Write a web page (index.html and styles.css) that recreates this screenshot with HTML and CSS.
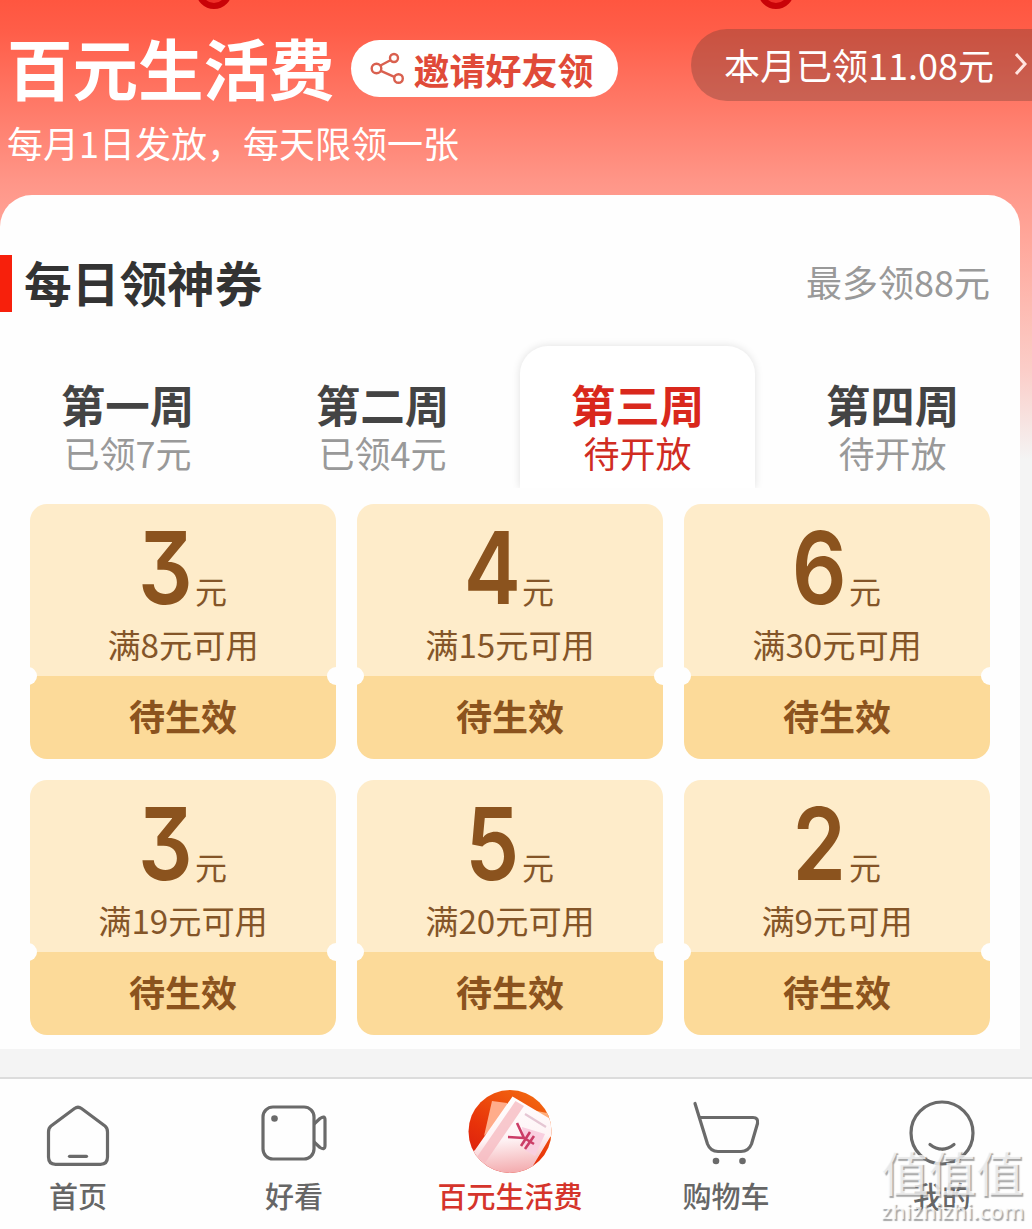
FILE: index.html
```html
<!DOCTYPE html>
<html lang="zh-CN">
<head>
    <meta charset="UTF-8">
    <meta name="viewport" content="width=device-width, initial-scale=1.0">
    <title>百元生活费</title>
    <link rel="stylesheet" href="styles.css">
</head>
<body>
    <div class="page">
        <span class="knot knot-left"></span>
        <span class="knot knot-right"></span>

        <header class="header">
            <div class="header-left">
                <div class="title-row">
                    <h1>百元生活费</h1>
                    <button class="invite">
                        <svg width="36" height="34" viewBox="0 0 36 34" fill="none" stroke="#d9604f" stroke-width="2.4">
                            <circle cx="6.5" cy="16.5" r="4.8"/>
                            <circle cx="24" cy="6" r="4"/>
                            <circle cx="28.5" cy="26.5" r="4.3"/>
                            <path d="M10.5 13.5 20.8 8M10.8 18.800 24.300 24.800"/>
                        </svg>
                        <span>邀请好友领</span>
                    </button>
                </div>
                <p class="subtitle">每月1日发放，每天限领一张</p>
            </div>
            <div class="received">
                <span>本月已领11.08元</span>
                <svg width="12" height="22" viewBox="0 0 12 22" fill="none" stroke="#ffe3df" stroke-width="3">
                    <path d="M1 1 10 11 1 21"/>
                </svg>
            </div>
        </header>

        <main class="card">
            <div class="section-head">
                <h2>每日领神券</h2>
                <span class="limit">最多领88元</span>
            </div>

            <div class="tabs">
                <div class="tab"><b>第一周</b><span>已领7元</span></div>
                <div class="tab"><b>第二周</b><span>已领4元</span></div>
                <div class="tab active"><b>第三周</b><span>待开放</span></div>
                <div class="tab"><b>第四周</b><span>待开放</span></div>
            </div>

            <div class="coupons">
                <div class="coupon">
                    <div class="coupon-top">
                        <div class="amount"><span class="num">3</span><span class="unit">元</span></div>
                        <div class="rule">满8元可用</div>
                    </div>
                    <div class="status">待生效</div>
                </div>
                <div class="coupon">
                    <div class="coupon-top">
                        <div class="amount"><span class="num">4</span><span class="unit">元</span></div>
                        <div class="rule">满15元可用</div>
                    </div>
                    <div class="status">待生效</div>
                </div>
                <div class="coupon">
                    <div class="coupon-top">
                        <div class="amount"><span class="num">6</span><span class="unit">元</span></div>
                        <div class="rule">满30元可用</div>
                    </div>
                    <div class="status">待生效</div>
                </div>
                <div class="coupon">
                    <div class="coupon-top">
                        <div class="amount"><span class="num">3</span><span class="unit">元</span></div>
                        <div class="rule">满19元可用</div>
                    </div>
                    <div class="status">待生效</div>
                </div>
                <div class="coupon">
                    <div class="coupon-top">
                        <div class="amount"><span class="num">5</span><span class="unit">元</span></div>
                        <div class="rule">满20元可用</div>
                    </div>
                    <div class="status">待生效</div>
                </div>
                <div class="coupon">
                    <div class="coupon-top">
                        <div class="amount"><span class="num">2</span><span class="unit">元</span></div>
                        <div class="rule">满9元可用</div>
                    </div>
                    <div class="status">待生效</div>
                </div>
            </div>
        </main>

        <nav class="tabbar">
            <a class="item">
                <svg width="84" height="84" viewBox="0 0 84 84" fill="none" stroke="#6a6a6a" stroke-width="3.2" stroke-linecap="round" stroke-linejoin="round">
                    <path d="M38.5 18.5Q42 16 45.5 18.5L69 36Q71.500 38 71.500 42V67Q71.500 74.300 64.500 74.300H19.500Q12.500 74.300 12.500 67V42Q12.500 38 15 36Z"/>
                    <path d="M33.500 66.300H50.500"/>
                </svg>
                <span>首页</span>
            </a>
            <a class="item">
                <svg width="84" height="84" viewBox="0 0 84 84" fill="none" stroke="#6a6a6a" stroke-width="3.2" stroke-linejoin="round">
                    <rect x="11" y="17" width="51" height="52" rx="10"/>
                    <path d="M62 34 68 28.500Q73 25 73 30V55.500Q73 60.500 68 57.500L62 52"/>
                    <circle cx="22.500" cy="28.500" r="3.300" fill="#6a6a6a" stroke="none"/>
                </svg>
                <span>好看</span>
            </a>
            <a class="item current">
                <svg width="84" height="84" viewBox="0 0 84 84">
                    <defs>
                        <linearGradient id="disc" x1="0.8" y1="0" x2="0.2" y2="1">
                            <stop offset="0" stop-color="#f36a10"/>
                            <stop offset="0.6" stop-color="#e8330a"/>
                            <stop offset="1" stop-color="#d81a10"/>
                        </linearGradient>
                        <linearGradient id="note" x1="0.4" y1="0" x2="0.5" y2="1">
                            <stop offset="0" stop-color="#ffffff"/>
                            <stop offset="0.55" stop-color="#fef3f5"/>
                            <stop offset="1" stop-color="#f3a9ac"/>
                        </linearGradient>
                        <clipPath id="round"><circle cx="42" cy="41.5" r="41.5"/></clipPath>
                    </defs>
                    <g clip-path="url(#round)">
                        <rect width="84" height="84" fill="url(#disc)"/>
                        <path d="M24 11 39 13 40 24 16 46Z" fill="#ffac8a"/>
                        <path d="M64 20 84 24V48L64 36Z" fill="#ffae7c"/>
                        <path d="M44.500 6.500 84 30V44L60 84H0V66L7 60Z" fill="url(#note)"/>
                        <path d="M47.500 11 56 16 17 73 9 67Z" fill="#f6bcc2" opacity="0.800"/>
                        <path d="M54 37 77 44 67 66 57 60Z" fill="#f9cfe0"/>
                        <path d="M57 24 78 37" stroke="#e5c6d3" stroke-width="2.200"/>
                        <path d="M49 33 56 48M40 47 56 48 66 54M62 42 53 56M66 46 57 59" fill="none" stroke="#cb3d67" stroke-width="2.600"/>
                    </g>
                </svg>
                <span>百元生活费</span>
            </a>
            <a class="item">
                <svg width="84" height="84" viewBox="0 0 84 84" fill="none" stroke="#6a6a6a" stroke-width="3.2" stroke-linecap="round" stroke-linejoin="round">
                    <path d="M11 13.500 23.500 54Q26.500 61.500 34 61.500H57Q64.500 61.500 67.500 54L73.500 33.500Q74.500 27.500 69 27.500H16"/>
                    <circle cx="32" cy="71" r="3.300" fill="#6a6a6a" stroke="none"/>
                    <circle cx="58.500" cy="71" r="3.300" fill="#6a6a6a" stroke="none"/>
                </svg>
                <span>购物车</span>
            </a>
            <a class="item">
                <svg width="84" height="84" viewBox="0 0 84 84" fill="none" stroke="#6a6a6a" stroke-width="3.2" stroke-linecap="round">
                    <circle cx="42" cy="43" r="31"/>
                    <path d="M30 54.500Q42 64 54 54.500"/>
                </svg>
                <span>我的</span>
            </a>
        </nav>

        <div class="watermark">
            <div class="mark-name">值值值</div>
            <div class="mark-url">zhizhizhi.com</div>
        </div>
    </div>
</body>
</html>
```

FILE: styles.css
```css
* {
    box-sizing: border-box;
    margin: 0;
    padding: 0;
}

body {
    font-family: "Noto Sans CJK SC", sans-serif;
    background: #f4f4f4;
}

.page {
    position: relative;
    width: 1032px;
    height: 1229px;
    overflow: hidden;
    display: flex;
    flex-direction: column;
    background: linear-gradient(#ff5640 0, #ff5d48 30px, #ff9587 180px, #ffa79b 240px, #fbcdc8 370px, #f4f4f4 460px);
}

/* bottom of the two red knots hanging from the banner */
.knot {
    position: absolute;
    top: -27px;
    width: 36px;
    height: 36px;
    border: 6px solid #c90308;
    border-radius: 50%;
    background: #ef2f28;
}

.knot-left {
    left: 196px;
}

.knot-right {
    left: 758px;
}

.header {
    display: flex;
    justify-content: space-between;
    align-items: flex-start;
    height: 195px;
    padding-top: 29px;
}

.header-left {
    padding-left: 7px;
}

.title-row {
    display: flex;
    align-items: center;
    gap: 16px;
    height: 79px;
}

h1 {
    color: #fff;
    font-size: 65.5px;
    font-weight: 700;
    line-height: 76px;
    padding-bottom: 3px;
}

.invite {
    display: flex;
    align-items: center;
    gap: 8px;
    width: 267px;
    height: 57px;
    padding-left: 19px;
    border: none;
    border-radius: 29px;
    background: #fff;
    color: #e04a38;
    font-family: inherit;
    font-size: 36px;
    font-weight: 700;
    line-height: 56px;
    white-space: nowrap;
}

.subtitle {
    color: #fff;
    font-size: 36px;
    line-height: 68px;
}

.received {
    display: flex;
    align-items: center;
    gap: 21px;
    width: 341px;
    height: 72px;
    padding: 0 0 2px 33px;
    border-radius: 36px 0 0 36px;
    background: rgba(100, 60, 50, 0.34);
    color: #fff;
    font-size: 36px;
    line-height: 68px;
    white-space: nowrap;
}

.card {
    width: 1020px;
    height: 854px;
    border-radius: 32px 32px 0 0;
    background: #fefefe;
}

.section-head {
    display: flex;
    align-items: center;
    justify-content: space-between;
    padding: 60px 30px 0 0;
}

h2 {
    height: 57px;
    padding-left: 12px;
    border-left: 12px solid #f7200c;
    color: #333;
    font-size: 47.7px;
    font-weight: 700;
    line-height: 53px;
}

.limit {
    padding-bottom: 5px;
    color: #999;
    font-size: 36px;
    line-height: 52px;
}

.tabs {
    display: flex;
    height: 176px;
    overflow: hidden;
}

.tab {
    flex: 1;
    margin: 34px 10px 0;
    padding-top: 33px;
    border-radius: 28px 28px 0 0;
    text-align: center;
    color: #999;
}

.tab b,
.tab span {
    display: block;
}

.tab b {
    color: #444;
    font-size: 44.5px;
    line-height: 50px;
}

.tab span {
    font-size: 36px;
    line-height: 46px;
}

.tab.active {
    background: #fff;
    box-shadow: 0 0 8px rgba(0, 0, 0, 0.12);
    color: #d02c22;
}

.tab.active b {
    color: #d9281c;
}

.coupons {
    display: grid;
    grid-template-columns: repeat(3, 306px);
    gap: 21px;
    padding: 16px 30px 0;
}

.coupon {
    position: relative;
    height: 255px;
    border-radius: 17px;
    overflow: hidden;
    text-align: center;
}

/* ticket notches */
.coupon::before,
.coupon::after {
    content: "";
    position: absolute;
    top: 163px;
    width: 18px;
    height: 18px;
    border-radius: 50%;
    background: #fefefe;
}

.coupon::before {
    left: -11px;
}

.coupon::after {
    right: -9px;
}

.coupon-top {
    height: 172px;
    background: #feecca;
}

.amount {
    display: flex;
    justify-content: center;
    align-items: baseline;
    height: 120px;
    color: #8b531e;
}

.num {
    display: flex;
    justify-content: center;
    width: 56px;
    padding-right: 4px;
    font-family: Inter, sans-serif;
    font-size: 101px;
    font-weight: 600;
    line-height: 127px;
    font-feature-settings: "cv09";
    transform: scaleX(0.85);
}

.unit {
    font-size: 32px;
    line-height: 40px;
    color: #845528;
}

.rule {
    color: #845528;
    font-size: 33.2px;
    line-height: 40px;
}

.status {
    height: 83px;
    background: #fcda99;
    color: #8b531e;
    font-size: 36px;
    font-weight: 700;
    line-height: 78px;
}

.tabbar {
    display: flex;
    width: 1080px;
    height: 152px;
    margin: 28px 0 0 -30px;
    border-top: 2px solid #dcdcdc;
    background: #fefefe;
    box-shadow: 0 -28px 0 #f4f4f4;
}

.item {
    display: flex;
    flex-direction: column;
    align-items: center;
    width: 216px;
    padding-top: 11px;
    color: #666;
    font-size: 29px;
    font-weight: 500;
    line-height: 40px;
}

.item span {
    margin-top: 1px;
}

.item.current {
    color: #d5342b;
}

.watermark {
    position: absolute;
    left: 881px;
    top: 1144px;
    color: rgba(255, 255, 255, 0.75);
    text-shadow: 1.5px 1.5px 1px rgba(120, 120, 120, 0.65);
    white-space: nowrap;
}

.mark-name {
    font-size: 47.5px;
    font-weight: 500;
    line-height: 53px;
}

.mark-url {
    font-family: "Open Sans", sans-serif;
    font-size: 22px;
    font-weight: 600;
    line-height: 26px;
}
```
